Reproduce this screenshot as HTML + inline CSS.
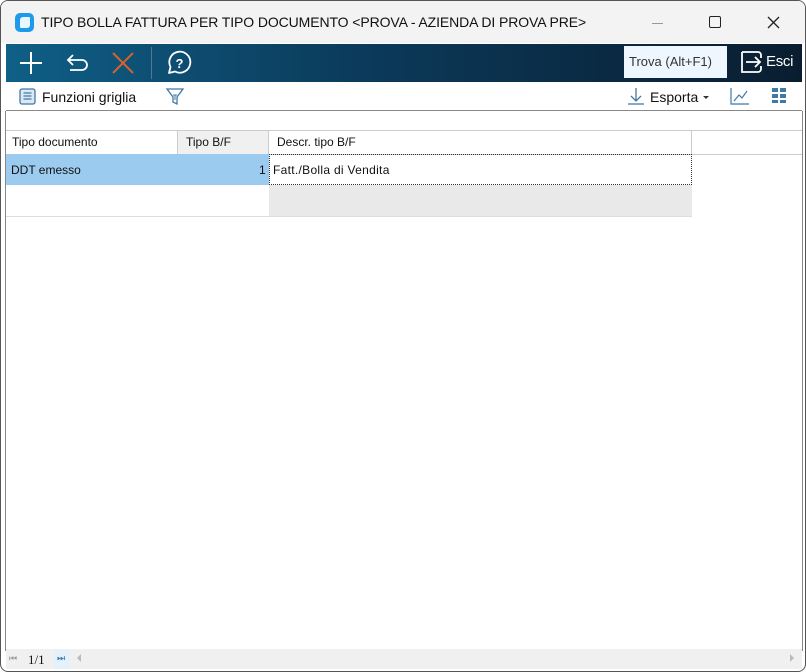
<!DOCTYPE html>
<html><head><style>
*{box-sizing:border-box;margin:0;padding:0}
body{width:806px;height:672px;overflow:hidden;background:#fff;font-family:"Liberation Sans",sans-serif;position:relative}
.win{position:absolute;left:0;top:0;width:806px;height:672px;border:1px solid #555;border-radius:8px;overflow:hidden;background:#fff}
.title{position:absolute;left:0;top:0;width:806px;height:42px;background:#f3f3f3;font-size:14px;color:#111}
.tb{position:absolute;left:5px;top:43px;width:796px;height:38px;background:linear-gradient(90deg,#0f5f86 0%,#0b3a5a 45%,#0a1d30 100%)}
.abs{position:absolute}
.hdr{position:absolute;top:129px;height:25px;background:#fff;border-top:1px solid #ccc;border-bottom:1px solid #ccc;font-size:12px;color:#111;line-height:22px}
.cell{position:absolute;font-size:12px;color:#111}
</style></head><body><div class="win">
<div class="title">
 <div class="abs" style="left:14px;top:12px;width:19px;height:19px;background:#1e9be8;border-radius:5px"><div class="abs" style="left:5px;top:4px;width:10px;height:11px;background:#e8f6ff;border-radius:3px 1px 3px 1px"></div></div>
 <div class="abs" style="left:40px;top:13px;white-space:nowrap;letter-spacing:-0.1px">TIPO BOLLA FATTURA PER TIPO DOCUMENTO &lt;PROVA - AZIENDA DI PROVA PRE&gt;</div>
 <div class="abs" style="left:651px;top:22px;width:11px;height:1px;background:#999"></div>
 <div class="abs" style="left:708px;top:15px;width:12px;height:12px;border:1.3px solid #222;border-radius:2px"></div>
 <svg class="abs" style="left:766px;top:15px" width="13" height="13"><path d="M1 1L12 12M12 1L1 12" stroke="#222" stroke-width="1.3"/></svg>
</div>
<div class="tb">
 <svg class="abs" style="left:13px;top:7px" width="24" height="24"><path d="M12 1V23M1 12H23" stroke="#fff" stroke-width="2"/></svg>
 <svg class="abs" style="left:60px;top:8px" width="24" height="22"><path d="M7 3L2 8L7 13M2 8H16A5 5 0 0 1 16 18H4" fill="none" stroke="#fff" stroke-width="1.8"/></svg>
 <svg class="abs" style="left:106px;top:8px" width="22" height="22"><path d="M1 1L21 21M21 1L1 21" stroke="#d9622b" stroke-width="2"/></svg>
 <div class="abs" style="left:145px;top:3px;width:1px;height:32px;background:#4c7a99"></div>
 <svg class="abs" style="left:160px;top:6px" width="26" height="26"><path d="M3 23L4.5 17A10.5 10.5 0 1 1 9 21.5Z" fill="none" stroke="#fff" stroke-width="1.8" stroke-linejoin="round"/><text x="13.5" y="18" font-size="13" font-weight="bold" fill="#fff" text-anchor="middle" font-family="Liberation Sans">?</text></svg>
 <div class="abs" style="left:618px;top:2px;width:103px;height:32px;background:#eef7ff;font-size:13px;color:#333;line-height:32px;padding-left:5px">Trova (Alt+F1)</div>
 <svg class="abs" style="left:733px;top:6px" width="24" height="24"><path d="M3 2H19A3 3 0 0 1 22 5V8M22 16V19A3 3 0 0 1 19 22H3V2" fill="none" stroke="#fff" stroke-width="1.8"/><path d="M7 12H21M16 7L21 12L16 17" fill="none" stroke="#fff" stroke-width="1.8"/></svg>
 <div class="abs" style="left:760px;top:9px;color:#fff;font-size:15px;letter-spacing:-0.3px">Esci</div>
</div>
<svg class="abs" style="left:18px;top:87px" width="17" height="17"><rect x="1" y="1" width="15" height="15" rx="2" fill="#dbe9f4" stroke="#3f79a6" stroke-width="1.3"/><path d="M4.5 5H12.5M4.5 8H12.5M4.5 11H12.5" stroke="#3f79a6" stroke-width="1.2"/></svg>
<div class="abs" style="left:41px;top:88px;font-size:14px;color:#111">Funzioni griglia</div>
<svg class="abs" style="left:164px;top:86px" width="20" height="20"><path d="M2 2H18L12 10V17L8 15V10Z" fill="none" stroke="#3f79a6" stroke-width="1.3"/><path d="M8 8H12M10 8V13" stroke="#3f79a6" stroke-width="1"/></svg>
<svg class="abs" style="left:626px;top:86px" width="18" height="18"><path d="M9 1V14M4 9L9 14L14 9M1 17H17" fill="none" stroke="#3f79a6" stroke-width="1.3"/></svg>
<div class="abs" style="left:649px;top:88px;font-size:14px;color:#111">Esporta</div>
<div class="abs" style="left:702px;top:95px;border-left:3px solid transparent;border-right:3px solid transparent;border-top:3px solid #333"></div>
<svg class="abs" style="left:729px;top:86px" width="20" height="18"><path d="M1 1V17H19" fill="none" stroke="#3f79a6" stroke-width="1.2"/><path d="M4 14L9 8L12 11L17 4" fill="none" stroke="#3f79a6" stroke-width="1.2"/></svg>
<svg class="abs" style="left:771px;top:87px" width="16" height="16" fill="#3f79a6"><rect x="0" y="0" width="6" height="4"/><rect x="8" y="0" width="6" height="4"/><rect x="0" y="6" width="6" height="4"/><rect x="8" y="6" width="6" height="4"/><rect x="0" y="12" width="6" height="3"/><rect x="8" y="12" width="6" height="3"/></svg>
<div class="abs" style="left:5px;top:109px;width:796px;height:1px;background:#888"></div>
<div class="abs" style="left:4px;top:110px;width:1px;height:540px;background:#888"></div>
<div class="abs" style="left:801px;top:110px;width:1px;height:540px;background:#888"></div>
<div class="hdr" style="left:5px;width:796px"></div>
<div class="hdr" style="left:5px;width:172px;border-right:1px solid #ccc;padding-left:6px">Tipo documento</div>
<div class="hdr" style="left:177px;width:91px;border-right:1px solid #ccc;padding-left:8px;background:#f0f0f0">Tipo B/F</div>
<div class="hdr" style="left:268px;width:423px;border-right:1px solid #ccc;padding-left:8px">Descr. tipo B/F</div>
<div class="abs" style="left:5px;top:153px;width:263px;height:31px;background:#9ccbf0"></div>
<div class="cell" style="left:10px;top:162px">DDT emesso</div>
<div class="cell" style="left:258px;top:162px">1</div>
<div class="abs" style="left:268px;top:153px;width:423px;height:31px;border:1px dotted #333"></div>
<div class="cell" style="left:272px;top:162px;letter-spacing:0.3px">Fatt./Bolla di Vendita</div>
<div class="abs" style="left:268px;top:184px;width:423px;height:31px;background:#e9e9e9"></div>
<div class="abs" style="left:5px;top:215px;width:686px;height:1px;background:#ddd"></div>
<div class="abs" style="left:5px;top:648px;width:796px;height:20px;background:#f0f0f0"></div>
<div class="abs" style="left:8px;top:652px;font-size:9px;color:#999">&#9198;</div>
<div class="abs" style="left:27px;top:651px;font-size:13px;color:#111;font-family:'Liberation Serif',serif">1/1</div>
<div class="abs" style="left:53px;top:648px;width:16px;height:20px;background:#e4f1fb"></div>
<div class="abs" style="left:56px;top:652px;font-size:9px;color:#3f79a6">&#9197;</div>
<div class="abs" style="left:76px;top:653px;border-top:4px solid transparent;border-bottom:4px solid transparent;border-right:4px solid #bbb"></div>
<div class="abs" style="left:789px;top:653px;border-top:4px solid transparent;border-bottom:4px solid transparent;border-left:4px solid #bbb"></div>
</div></body></html>
